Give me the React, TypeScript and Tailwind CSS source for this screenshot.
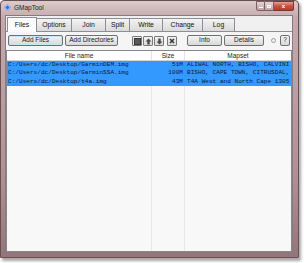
const tabs = [
  { label: "Files", w: "w-[30px]", active: true },
  { label: "Options", w: "w-[35px]" },
  { label: "Join", w: "w-[34px]" },
  { label: "Split", w: "w-[24px]" },
  { label: "Write", w: "w-[33px]" },
  { label: "Change", w: "w-[40px]" },
  { label: "Log", w: "w-[32px]" },
];

// mapset column is cut at the table edge, like in the window
const rows = [
  { file: "C:/Users/dc/Desktop/GarminDEM.img", size: "51M", mapset: "ALIWAL NORTH, BISHO, CALVINI" },
  { file: "C:/Users/dc/Desktop/GarminSSA.img", size: "100M", mapset: "BISHO, CAPE TOWN, CITRUSDAL," },
  { file: "C:/Users/dc/Desktop/t4a.img", size: "43M", mapset: "T4A West and North Cape 1305" },
];

const btn =
  "flex items-center justify-center h-[11px] rounded-[2px] border border-[#707070] bg-[linear-gradient(to_bottom,#f4f4f4,#e6e6e6_50%,#d8d8d8)] text-[6.5px] text-[#1a1a1a] leading-none";

function TitleBar() {
  return (
    <div className="h-[14px] flex items-start">
      <div className="ml-[4px] mt-[4px] w-[5px] h-[5px] rotate-45 bg-[#2f6fe0] border border-[#9ec0ff]" />
      <span className="ml-[4px] mt-[3px] text-[6.5px] leading-[8px] text-[#222]">GMapTool</span>
      <div className="ml-auto mr-[4px] flex">
        <div className="w-[9px] h-[10px] rounded-bl-[2px] border border-[#7b5f62] bg-[linear-gradient(to_bottom,#e4d4d6,#bda3a6)] flex items-end justify-center pb-[2px]">
          <div className="w-[4px] h-[1px] bg-white" />
        </div>
        <div className="w-[9px] h-[10px] border border-l-0 border-[#7b5f62] bg-[linear-gradient(to_bottom,#e4d4d6,#bda3a6)] flex items-center justify-center">
          <div className="w-[4px] h-[3px] border border-white" />
        </div>
        <div className="w-[20px] h-[10px] rounded-br-[2px] border border-l-0 border-[#6e3a36] bg-[linear-gradient(to_bottom,#e9a197,#c9503f_50%,#b83a2b)] flex items-center justify-center text-white text-[6px] font-bold leading-none">
          x
        </div>
      </div>
    </div>
  );
}

function IconButton({ children }: { children: React.ReactNode }) {
  return (
    <div className="w-[10px] h-[10px] rounded-[1px] border border-[#7a7a7a] bg-[linear-gradient(to_bottom,#f2f2f2,#d9d9d9)] flex items-center justify-center">
      {children}
    </div>
  );
}

export default function App() {
  return (
    <div className="w-[304px] h-[263px] bg-white overflow-hidden font-['Liberation_Sans',Arial,sans-serif]">
      <div className="w-[299px] h-[258px] flex flex-col rounded-t-[4px] border border-[#6a4f52] bg-[linear-gradient(to_bottom,#dccbcd,#c5abae_16px,#ad9094_70%,#95757a)] shadow-[2px_3px_3px_rgba(0,0,0,0.35)]">
        <TitleBar />

        <div className="flex-1 ml-[4px] mr-[5px] mb-[4px] flex flex-col bg-[#f0f0f0] border border-[#8a7a7d]">
          {/* tabs */}
          <div className="h-[15px] flex items-end pl-[1px]">
            {tabs.map((t) =>
              t.active ? (
                <div
                  key={t.label}
                  className={`${t.w} h-[15px] -mb-px z-10 flex items-center justify-center border border-b-0 border-[#8c8e94] bg-[#fcfcfc] text-[6.8px] text-[#111]`}
                >
                  {t.label}
                </div>
              ) : (
                <div
                  key={t.label}
                  className={`${t.w} h-[13px] flex items-center justify-center border border-l-0 border-b-0 border-[#8c8e94] bg-[linear-gradient(to_bottom,#f4f4f4,#e6e6e6_50%,#dadada)] text-[6.8px] text-[#111]`}
                >
                  {t.label}
                </div>
              )
            )}
          </div>

          {/* panel */}
          <div className="flex-1 flex flex-col border-t border-[#8c8e94] bg-[#f5f5f5]">
            <div className="h-[18px] flex items-start pt-[3px] pl-[2px]">
              <div className={`${btn} w-[55px] border-[#3c7fb1] shadow-[inset_0_0_0_1px_#c6e4f8]`}>Add Files</div>
              <div className={`${btn} w-[53px] ml-[2px]`}>Add Directories</div>

              <div className="ml-[14px] mt-[1px] flex gap-[1px]">
                <IconButton>
                  <div className="w-[7px] h-[7px] bg-[#5a5a5a] border border-[#3a3a3a]" />
                </IconButton>
                <IconButton>
                  <svg width="7" height="7" viewBox="0 0 7 7">
                    <path d="M3.5 0.5 L6.5 3.5 H4.7 V6.5 H2.3 V3.5 H0.5 Z" fill="#4a4a4a" />
                  </svg>
                </IconButton>
                <IconButton>
                  <svg width="7" height="7" viewBox="0 0 7 7">
                    <path d="M3.5 6.5 L6.5 3.5 H4.7 V0.5 H2.3 V3.5 H0.5 Z" fill="#4a4a4a" />
                  </svg>
                </IconButton>
                <div className="ml-[2px]">
                  <IconButton>
                    <svg width="6" height="6" viewBox="0 0 6 6">
                      <path d="M1 1 L5 5 M5 1 L1 5" stroke="#3a3a3a" strokeWidth="1.6" />
                    </svg>
                  </IconButton>
                </div>
              </div>

              <div className={`${btn} w-[35px] ml-[10px]`}>Info</div>
              <div className={`${btn} w-[40px] ml-[2px]`}>Details</div>
              <div className="w-[5px] h-[5px] ml-[7px] mt-[3px] rounded-full border border-[#9a9a9a] bg-[#f4f4f4]" />
              <div className={`${btn} w-[10px] ml-[4px]`}>?</div>
            </div>

            {/* table */}
            <div className="flex-1 flex flex-col border border-[#828790] bg-[#f8f8f8] relative">
              <div className="h-[10px] flex border-b border-[#d5d5d5] bg-white text-[6.5px] text-[#222] leading-[9px]">
                <div className="w-[145px] text-center border-r border-[#e3e3e3]">File name</div>
                <div className="w-[33px] text-center border-r border-[#e3e3e3]">Size</div>
                <div className="flex-1 text-center">Mapset</div>
              </div>
              <div className="flex-1 flex">
                <div className="w-[145px] border-r border-[#e6e6e6]" />
                <div className="w-[33px] border-r border-[#e6e6e6]" />
                <div className="flex-1" />
              </div>
              <div className="absolute left-0 right-0 top-[10px] flex flex-col font-['Liberation_Mono',monospace] text-[6.1px] text-[#101838]">
                {rows.map((r) => (
                  <div key={r.file} className="h-[8.4px] leading-[8.4px] flex bg-[#3399ff] whitespace-nowrap">
                    <div className="w-[146px] pl-[1px]">{r.file}</div>
                    <div className="w-[32px] pr-[2px] text-right">{r.size}</div>
                    <div className="flex-1 pl-[2px]">{r.mapset}</div>
                  </div>
                ))}
              </div>
            </div>
          </div>
        </div>
      </div>
    </div>
  );
}
